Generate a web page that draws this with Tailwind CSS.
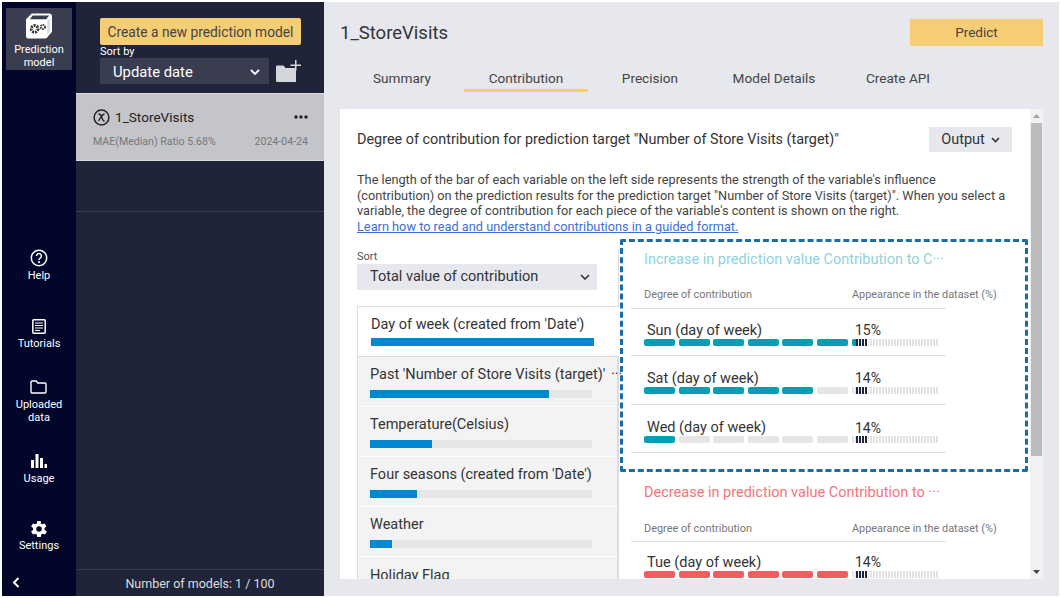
<!DOCTYPE html>
<html lang="en">
<head>
    <meta charset="UTF-8">
    <title>Prediction model</title>
    <script src="https://cdn.jsdelivr.net/npm/@tailwindcss/browser@4"></script>
</head>
<body class="w-[1061px] h-[598px] overflow-hidden bg-white font-['Roboto',sans-serif] text-[#333]">
<div class="flex h-[594px] w-[1057px] ml-[2px] mt-[2px]">

    <!-- Icon rail -->
    <nav class="w-[74px] shrink-0 bg-[#02062b] text-white flex flex-col items-center text-[11px] leading-[13px]">
        <div class="mt-[6px] w-[66px] h-[62px] bg-[#3a3d50] flex flex-col items-center pt-[5px]">
            <svg width="26" height="26" viewBox="0 0 27 26"><path d="M6 0h18a3 3 0 0 1 3 3v16l-5 6a3 3 0 0 1-2 1H3a3 3 0 0 1-3-3V6z" fill="#fff"/><path d="M7 2h17l-3 4H4z" fill="#3a3d50"/><path d="M22 8l3-3v13l-3 4z" fill="#ddd"/><circle cx="9" cy="16" r="3.500" fill="none" stroke="#333" stroke-width="3" stroke-dasharray="2 1"/><circle cx="17.500" cy="14" r="2.200" fill="none" stroke="#333" stroke-width="2" stroke-dasharray="1.500 .8"/></svg>
            <span class="mt-[4px] text-center">Prediction<br>model</span>
        </div>
        <a class="mt-[179px] flex flex-col items-center">
            <svg width="18" height="18" viewBox="0 0 18 18" fill="none" stroke="#fff" stroke-width="1.500"><circle cx="9" cy="9" r="7.700"/><path d="M6.600 7a2.400 2.400 0 1 1 3.600 2.100c-.8.5-1.200 1-1.200 2"/><circle cx="9" cy="13.200" r=".4"/></svg>
            <span class="mt-[2px]">Help</span>
        </a>
        <a class="mt-[37px] flex flex-col items-center">
            <svg width="14" height="15" viewBox="0 0 14 15" fill="none" stroke="#fff"><rect x=".8" y=".8" width="12.400" height="13.400" rx="1" stroke-width="1.500"/><path d="M3 4h8M3 6.500h8M3 9h8M3 11.500h5"/></svg>
            <span class="mt-[3px]">Tutorials</span>
        </a>
        <a class="mt-[30px] flex flex-col items-center">
            <svg width="17" height="14" viewBox="0 0 17 14" fill="none" stroke="#fff" stroke-width="1.400"><path d="M1 2.200c0-.7.5-1.200 1.200-1.200h4l1.600 2h7c.7 0 1.200.5 1.200 1.200v7.600c0 .7-.5 1.200-1.200 1.200H2.200c-.7 0-1.200-.5-1.200-1.200z"/></svg>
            <span class="mt-[4px] text-center">Uploaded<br>data</span>
        </a>
        <a class="mt-[30px] flex flex-col items-center">
            <svg width="16" height="14" viewBox="0 0 16 14" fill="#fff"><rect x="0" y="6" width="3" height="8"/><rect x="4.500" y="0" width="3" height="14"/><rect x="9" y="4" width="3" height="10"/><rect x="13.500" y="10" width="2.500" height="4"/></svg>
            <span class="mt-[4px]">Usage</span>
        </a>
        <a class="mt-[33px] flex flex-col items-center">
            <svg width="22" height="22" viewBox="0 0 24 24" fill="#fff"><path fill-rule="evenodd" d="M19.400 13a7.500 7.500 0 0 0 0-2l2.100-1.600-2-3.500-2.500 1a7.500 7.500 0 0 0-1.700-1L15.400 3.300h-4l-.4 2.600a7.500 7.500 0 0 0-1.700 1l-2.500-1-2 3.500L6.900 11a7.500 7.500 0 0 0 0 2l-2.100 1.600 2 3.500 2.500-1a7.500 7.500 0 0 0 1.700 1l.4 2.600h4l.4-2.600a7.500 7.500 0 0 0 1.700-1l2.500 1 2-3.500zM13.400 15a3 3 0 1 1 0-6 3 3 0 0 1 0 6z" transform="translate(-1.400 0)"/></svg>
            <span class="mt-[-1px]">Settings</span>
        </a>
        <div class="mt-auto self-start h-[27px] pl-[10px] flex items-center">
            <svg width="8" height="11" viewBox="0 0 8 11" fill="none" stroke="#fff" stroke-width="2"><path d="M6.500 1 2 5.500 6.500 10"/></svg>
        </div>
    </nav>

    <!-- Model list panel -->
    <aside class="w-[248px] shrink-0 bg-[#1f2439] flex flex-col">
        <div class="h-[91px] pl-[24px] pt-[16px]">
            <button class="block w-[201px] h-[27px] pt-[1px] bg-[#f5cd75] rounded-[2px] text-[13.750px] text-[#444] text-center whitespace-nowrap">Create a new prediction model</button>
            <div class="text-[11px] leading-[13px] text-white">Sort by</div>
            <div class="flex items-center">
                <div class="w-[169px] h-[26px] bg-[#3a3d50] text-white text-[14.800px] pt-[2px] pl-[13px] pr-[9px] flex items-center justify-between">
                    Update date
                    <svg width="10" height="6" viewBox="0 0 10 6" fill="none" stroke="#fff" stroke-width="1.800"><path d="m1 1 4 4 4-4"/></svg>
                </div>
                <svg class="ml-[7px]" width="25" height="22" viewBox="0 0 25 22" fill="#d5d6da"><path d="M0 7c0-1 .6-1.500 1.500-1.500h6l2 2.500H20v14H1.500C.6 22 0 21.500 0 20.500z"/><path d="M19 0h1.500v4.500H25V6h-4.500v4.500H19V6h-4.500V4.500H19z"/></svg>
            </div>
        </div>
        <div class="h-[68px] bg-[#c3c5ca] border-y border-[#d8d9dd] pl-[17px] pr-[16px] pt-[13px]">
            <div class="flex items-center justify-between">
                <div class="flex items-center gap-[5px] text-[13.600px] leading-[20px] text-[#222]">
                    <svg width="17" height="17" viewBox="0 0 17 17"><circle cx="8.500" cy="8.500" r="7.400" fill="none" stroke="#222" stroke-width="1.500"/><path d="M5.500 5c1.500 0 2.500.5 3 2.500s1.500 4.500 3 4.500M11.500 5c-1.500 0-4 3.500-6 7" fill="none" stroke="#222" stroke-width="1.300"/></svg>
                    1_StoreVisits
                </div>
                <svg width="14" height="4" viewBox="0 0 14 4" fill="#222"><circle cx="2" cy="2" r="1.700"/><circle cx="7" cy="2" r="1.700"/><circle cx="12" cy="2" r="1.700"/></svg>
            </div>
            <div class="mt-[8px] flex justify-between text-[10.600px] leading-[14px] text-[#777]">
                <span>MAE(Median) Ratio 5.68%</span><span>2024-04-24</span>
            </div>
        </div>
        <div class="h-[51px] border-b border-[#3a3d50]"></div>
        <div class="mt-auto h-[27px] pt-[2px] border-t border-[#3a3d50] text-[#ddd] text-[12.500px] flex items-center justify-center">Number of models: 1 / 100</div>
    </aside>

    <!-- Main -->
    <main class="flex-1 bg-[#e6e8ee] relative pl-[16px] pr-[16px] flex flex-col">
        <div class="h-[60px] flex items-center justify-between">
            <h1 class="pt-[3px] text-[18.500px] text-[#333]">1_StoreVisits</h1>
            <button class="w-[133px] h-[27px] bg-[#f5cd75] rounded-[1px] text-[13.500px] text-[#444]">Predict</button>
        </div>
        <div class="flex h-[30px] text-[13.600px] leading-[20px] text-[#444]">
            <a class="w-[124px] pt-[6px] text-center">Summary</a>
            <a class="w-[124px] pt-[6px] text-center border-b-[3px] border-[#f5cd75]">Contribution</a>
            <a class="w-[124px] pt-[6px] text-center">Precision</a>
            <a class="w-[124px] pt-[6px] text-center">Model Details</a>
            <a class="w-[124px] pt-[6px] text-center">Create API</a>
        </div>

        <!-- Card -->
        <section class="mt-[17px] h-[470px] bg-white flex overflow-hidden">
            <div class="flex-1 min-w-0 pl-[17px] pt-[18px]">
                <div class="flex justify-between items-center h-[25px] pr-[18px]">
                    <h2 class="text-[14.400px] text-[#333]">Degree of contribution for prediction target "Number of Store Visits (target)"</h2>
                    <button class="w-[83px] h-[25px] bg-[#e6e8ee] text-[14.500px] flex items-center justify-center gap-[6px]">Output
                        <svg width="9" height="6" viewBox="0 0 9 6" fill="none" stroke="#333" stroke-width="1.600"><path d="m1 1 3.500 3.500L8 1"/></svg>
                    </button>
                </div>
                <p class="mt-[20px] text-[12.750px] leading-[15.700px] text-[#444] w-[654px]">The length of the bar of each variable on the left side represents the strength of the variable's influence (contribution) on the prediction results for the prediction target "Number of Store Visits (target)". When you select a variable, the degree of contribution for each piece of the variable's content is shown on the right.<br><a class="text-[#3b6fd6] underline">Learn how to read and understand contributions in a guided format.</a></p>

                <div class="mt-[14px] flex">
                    <!-- Variables -->
                    <div class="w-[261px] shrink-0">
                        <div class="text-[11px] leading-[15px] text-[#555]">Sort</div>
                        <div class="w-[240px] h-[26px] pt-[1px] bg-[#e6e8ee] text-[14.500px] text-[#333] pl-[13px] pr-[7px] flex items-center justify-between">Total value of contribution
                            <svg width="10" height="6" viewBox="0 0 10 6" fill="none" stroke="#333" stroke-width="1.600"><path d="m1 1 4 4 4-4"/></svg>
                        </div>
                        <div class="mt-[16px] border-y border-l border-[#ddd] h-[51px] pl-[13px] pr-[25px] pt-[7px] bg-white mr-[-1px] relative z-10">
                            <div class="text-[14.500px] leading-[22px] whitespace-nowrap">Day of week (created from 'Date')</div>
                            <div class="mt-[2px] h-[8px] bg-[#0288d1]"></div>
                        </div>
                        <div class="bg-[#f3f3f3] border-l border-r border-[#ddd] divide-y divide-white text-[14.500px] whitespace-nowrap">
                            <div class="h-[50px] pl-[12px] pr-[25px] pt-[7px]">
                                <div class="leading-[22px]">Past 'Number of Store Visits (target)' <span class="ml-[2px]">···</span></div>
                                <div class="mt-[4px] h-[8px] bg-[#e6e6e6]"><div class="h-full bg-[#0288d1]" style="width:80.500%"></div></div>
                            </div>
                            <div class="h-[50px] pl-[12px] pr-[25px] pt-[7px]">
                                <div class="leading-[22px]">Temperature(Celsius)</div>
                                <div class="mt-[4px] h-[8px] bg-[#e6e6e6]"><div class="h-full bg-[#0288d1]" style="width:28%"></div></div>
                            </div>
                            <div class="h-[50px] pl-[12px] pr-[25px] pt-[7px]">
                                <div class="leading-[22px]">Four seasons (created from 'Date')</div>
                                <div class="mt-[4px] h-[8px] bg-[#e6e6e6]"><div class="h-full bg-[#0288d1]" style="width:21%"></div></div>
                            </div>
                            <div class="h-[50px] pl-[12px] pr-[25px] pt-[7px]">
                                <div class="leading-[22px]">Weather</div>
                                <div class="mt-[4px] h-[8px] bg-[#e6e6e6]"><div class="h-full bg-[#0288d1]" style="width:10%"></div></div>
                            </div>
                            <div class="h-[50px] pl-[12px] pr-[25px] pt-[8px]">
                                <div class="leading-[22px]">Holiday Flag</div>
                            </div>
                        </div>
                    </div>

                    <!-- Variable content -->
                    <div class="flex-1 min-w-0 border-l border-[#ddd] pl-[12px] pt-[1px]">
                        <div class="pl-[13px] text-[14.500px] leading-[20px] text-[#8fd3dc]">Increase in prediction value Contribution to C···</div>
                        <div class="mt-[17px] w-[315px] pt-[1px] pl-[13px] flex text-[10.900px] leading-[14px] text-[#777] h-[22px] border-b border-[#ddd] whitespace-nowrap"><span class="w-[208px] shrink-0">Degree of contribution</span><span>Appearance in the dataset (%)</span></div>

                        <div class="w-[315px] h-[47px] border-b border-[#ddd] pl-[13px] pt-[13px]">
                            <div class="flex text-[14.500px] leading-[17px]"><span class="w-[208px] shrink-0 pl-[3px]">Sun (day of week)</span><span class="pl-[3px] text-[14px]">15%</span></div>
                            <div class="flex items-center">
                                <div class="flex gap-[3.500px]">
                                    <i class="w-[31px] h-[7px] rounded-[2px] bg-[#00a0b4]"></i><i class="w-[31px] h-[7px] rounded-[2px] bg-[#00a0b4]"></i><i class="w-[31px] h-[7px] rounded-[2px] bg-[#00a0b4]"></i><i class="w-[31px] h-[7px] rounded-[2px] bg-[#00a0b4]"></i><i class="w-[31px] h-[7px] rounded-[2px] bg-[#00a0b4]"></i><i class="w-[31px] h-[7px] rounded-[2px] bg-[#00a0b4]"></i>
                                </div>
                                <div class="ml-[4px] w-[87px] h-[7px] flex bg-[repeating-linear-gradient(90deg,#e3e3e3_0_2px,#fff_2px_3px)]"><i class="w-[4px] rounded-l-[2px] bg-[#00a0b4]"></i><div class="w-[12px] h-full bg-[repeating-linear-gradient(90deg,#1b2440_0_2px,#fff_2px_3px)]"></div></div>
                            </div>
                        </div>
                        <div class="w-[315px] h-[49px] border-b border-[#ddd] pl-[13px] pt-[14px]">
                            <div class="flex text-[14.500px] leading-[17px]"><span class="w-[208px] shrink-0 pl-[3px]">Sat (day of week)</span><span class="pl-[3px] text-[14px]">14%</span></div>
                            <div class="flex items-center">
                                <div class="flex gap-[3.500px]">
                                    <i class="w-[31px] h-[7px] rounded-[2px] bg-[#00a0b4]"></i><i class="w-[31px] h-[7px] rounded-[2px] bg-[#00a0b4]"></i><i class="w-[31px] h-[7px] rounded-[2px] bg-[#00a0b4]"></i><i class="w-[31px] h-[7px] rounded-[2px] bg-[#00a0b4]"></i><i class="w-[31px] h-[7px] rounded-[2px] bg-[#00a0b4]"></i><i class="w-[31px] h-[7px] rounded-[2px] bg-[#e5e5e5]"></i>
                                </div>
                                <div class="ml-[4px] w-[87px] h-[7px] flex bg-[repeating-linear-gradient(90deg,#e3e3e3_0_2px,#fff_2px_3px)]"><div class="ml-[4px] w-[12px] h-full bg-[repeating-linear-gradient(90deg,#1b2440_0_2px,#fff_2px_3px)]"></div></div>
                            </div>
                        </div>
                        <div class="w-[315px] h-[48px] border-b border-[#ddd] pl-[13px] pt-[15px]">
                            <div class="flex text-[14.500px] leading-[16px]"><span class="w-[208px] shrink-0 pl-[3px]">Wed (day of week)</span><span class="pl-[3px] text-[14px]">14%</span></div>
                            <div class="flex items-center">
                                <div class="flex gap-[3.500px]">
                                    <i class="w-[31px] h-[7px] rounded-[2px] bg-[#00a0b4]"></i><i class="w-[31px] h-[7px] rounded-[2px] bg-[#e5e5e5]"></i><i class="w-[31px] h-[7px] rounded-[2px] bg-[#e5e5e5]"></i><i class="w-[31px] h-[7px] rounded-[2px] bg-[#e5e5e5]"></i><i class="w-[31px] h-[7px] rounded-[2px] bg-[#e5e5e5]"></i><i class="w-[31px] h-[7px] rounded-[2px] bg-[#e5e5e5]"></i>
                                </div>
                                <div class="ml-[4px] w-[87px] h-[7px] flex bg-[repeating-linear-gradient(90deg,#e3e3e3_0_2px,#fff_2px_3px)]"><div class="ml-[4px] w-[12px] h-full bg-[repeating-linear-gradient(90deg,#1b2440_0_2px,#fff_2px_3px)]"></div></div>
                            </div>
                        </div>

                        <div class="mt-[30px] pl-[13px] text-[14.500px] leading-[20px] text-[#f5747c]">Decrease in prediction value Contribution to ···</div>
                        <div class="mt-[18px] w-[315px] pt-[1px] pl-[13px] flex text-[10.900px] leading-[14px] text-[#777] h-[21px] border-b border-[#ddd] whitespace-nowrap"><span class="w-[208px] shrink-0">Degree of contribution</span><span>Appearance in the dataset (%)</span></div>
                        <div class="w-[315px] h-[48px] pl-[13px] pt-[12px]">
                            <div class="flex text-[14.500px] leading-[17px]"><span class="w-[208px] shrink-0 pl-[3px]">Tue (day of week)</span><span class="pl-[3px] text-[14px]">14%</span></div>
                            <div class="flex items-center">
                                <div class="flex gap-[3.500px]">
                                    <i class="w-[31px] h-[7px] rounded-[2px] bg-[#f05f5f]"></i><i class="w-[31px] h-[7px] rounded-[2px] bg-[#f05f5f]"></i><i class="w-[31px] h-[7px] rounded-[2px] bg-[#f05f5f]"></i><i class="w-[31px] h-[7px] rounded-[2px] bg-[#f05f5f]"></i><i class="w-[31px] h-[7px] rounded-[2px] bg-[#f05f5f]"></i><i class="w-[31px] h-[7px] rounded-[2px] bg-[#f05f5f]"></i>
                                </div>
                                <div class="ml-[4px] w-[87px] h-[7px] flex bg-[repeating-linear-gradient(90deg,#e3e3e3_0_2px,#fff_2px_3px)]"><div class="ml-[4px] w-[12px] h-full bg-[repeating-linear-gradient(90deg,#1b2440_0_2px,#fff_2px_3px)]"></div></div>
                            </div>
                        </div>
                    </div>
                </div>
            </div>

            <!-- Scrollbar -->
            <div class="w-[13px] shrink-0 bg-[#f1f1f1] flex flex-col items-center">
                <svg class="mt-[5px]" width="7" height="4" viewBox="0 0 7 4" fill="#a3a3a3"><path d="M3.500 0 7 4H0z"/></svg>
                <div class="mt-[5px] w-[11px] h-[333px] bg-[#bcbcbc]"></div>
                <svg class="mt-auto mb-[5px]" width="7" height="4" viewBox="0 0 7 4" fill="#444"><path d="M0 0h7L3.500 4z"/></svg>
            </div>
        </section>

        <!-- Annotation overlay -->
        <div class="absolute left-[296px] top-[237px] w-[408px] h-[233px] border-[3px] border-dashed border-[#1a6ea8] rounded-[2px]"></div>
    </main>
</div>
</body>
</html>
